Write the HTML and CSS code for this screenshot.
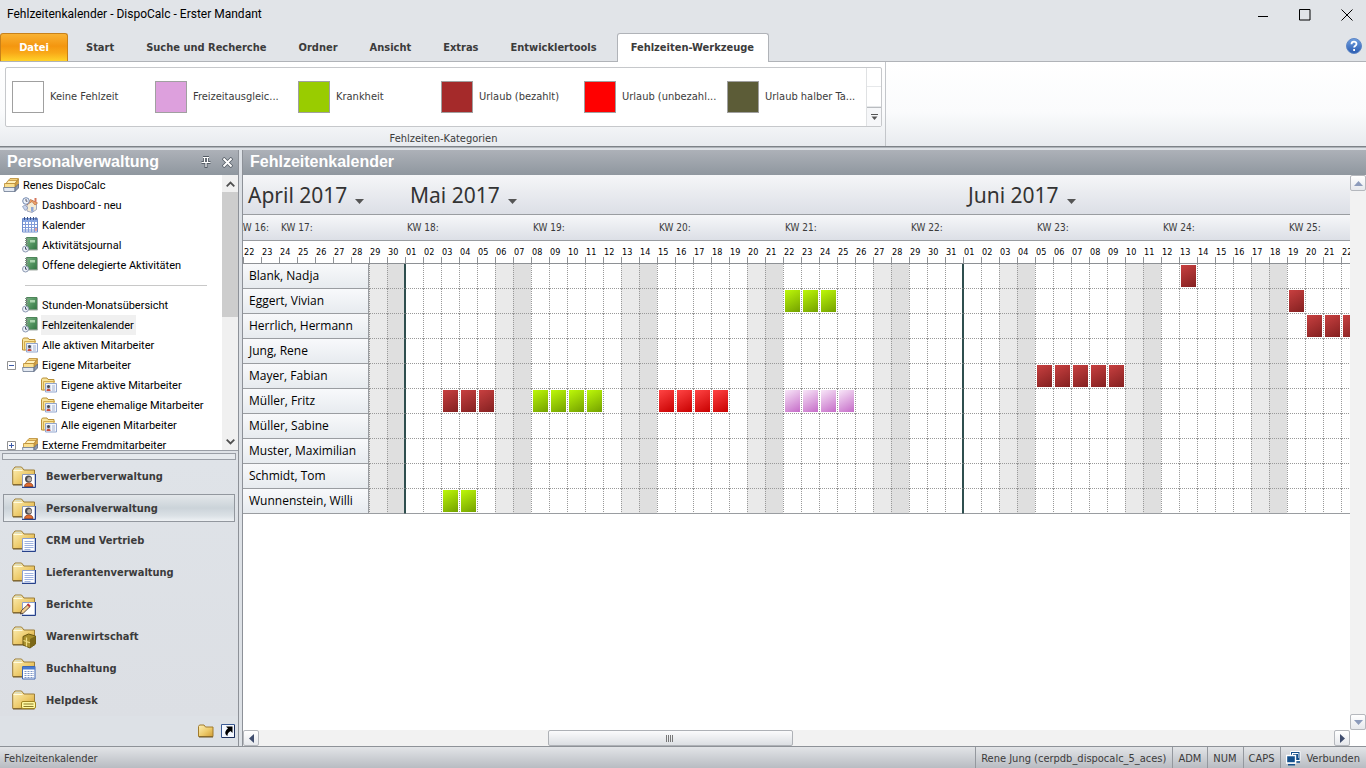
FILE: index.html
```html
<!DOCTYPE html>
<html lang="de">
<head>
<meta charset="utf-8">
<title>Fehlzeitenkalender - DispoCalc - Erster Mandant</title>
<link rel="stylesheet" href="styles.css">
</head>
<body>
<svg class="sprite" aria-hidden="true">
  <defs>
    <linearGradient id="g-folder" x1="0" y1="0" x2="1" y2="1"><stop offset="0" stop-color="#fdf0b8"/><stop offset=".55" stop-color="#edcb6c"/><stop offset="1" stop-color="#d09c34"/></linearGradient>
    <linearGradient id="g-green" x1="0" y1="0" x2="1" y2="1"><stop offset="0" stop-color="#79b583"/><stop offset="1" stop-color="#2f7340"/></linearGradient>
    <linearGradient id="g-help" x1="0" y1="0" x2="0" y2="1"><stop offset="0" stop-color="#6f9fe0"/><stop offset="1" stop-color="#2a5bb0"/></linearGradient>
  </defs>
  <symbol id="i-root" viewBox="0 0 16 16">
    <path d="M4 5 7 1.500h8.500L13 5v5H4z" fill="#f3d07a" stroke="#b88a34" stroke-width=".8"/>
    <path d="M3 6.500 5.500 3.500h8.500L12 6.500z" fill="#fff0bb" stroke="#c1923a" stroke-width=".8"/>
    <path d="M13 5.500 15.500 2v6L12.500 11z" fill="#d9a648" stroke="#a97c2c" stroke-width=".6"/>
    <path d="M1.500 6.500h10.500v4.500H1.500z" fill="#fbdf8e" stroke="#b88a34" stroke-width=".8"/>
    <path d="M.5 10.500h11.500v4H1z" fill="#e3e9f2" stroke="#6b7890" stroke-width=".8"/>
    <path d="M12 10.500 15.500 7v4L12 14.500z" fill="#8b98ad" stroke="#5a6780" stroke-width=".8"/>
  </symbol>
  <symbol id="i-dash" viewBox="0 0 16 16">
    <path d="M5 8v6l5 1.500 4.500-3V7L10 3z" fill="#f4ead2" stroke="#8d96b2" stroke-width=".8"/>
    <path d="M4.500 8l4-5.500L15.500 6 13 8 10 4.500z" fill="#f0a468" stroke="#b9693a" stroke-width=".7"/>
    <path d="M12.500 1h2v4h-2z" fill="#d5765c"/><path d="M9 10h2.500v5L9 14.500z" fill="#8fa8d8"/>
    <circle cx="4" cy="4" r="3.300" fill="#eef3fb" stroke="#7388ad"/><path d="M4 2v2.200h1.500" fill="none" stroke="#556"/>
    <path d="M.5 9.500 3 8l3 3-3 2.500z" fill="#c9d4ec" stroke="#7f8fb2" stroke-width=".7"/>
  </symbol>
  <symbol id="i-cal" viewBox="0 0 16 16">
    <path d="M.5 1.500h15v13.500H.5z" fill="#fff" stroke="#6e8ccb"/><path d="M1 2h14v3H1z" fill="#88a6e2"/>
    <path d="M2.500 0v3M5.500 0v3M8.500 0v3M11.500 0v3M14 0v3" stroke="#3d5387"/>
    <path d="M1 7.500h14M1 10.500h14M1 13h14M3.500 5v10M6.500 5v10M9.500 5v10M12.500 5v10" stroke="#7f9ad8"/>
    <path d="M13 11h2v3h-2z" fill="#e6a1a1"/>
  </symbol>
  <symbol id="i-journal" viewBox="0 0 16 16">
    <path d="M4.500.5H15v12H4.500z" fill="url(#g-green)" stroke="#4d8559"/>
    <path d="M8 3h5v2.500H8z" fill="#a9d3ad"/><path d="M15.500 1v12H5" fill="none" stroke="#a3ada6"/>
    <path d="M3 1.500h3M3 3.500h3M3 5.500h3M3 7.500h3" stroke="#7f8d85"/>
    <circle cx="3.500" cy="12" r="3" fill="#eef2f8" stroke="#8c99b2"/><path d="M3.500 10v2.200H5" fill="none" stroke="#44506b"/>
  </symbol>
  <symbol id="i-people" viewBox="0 0 16 16">
    <path d="M.5 13V2.500L1.500 1H6l1 1.500h6V13z" fill="#f8e49c" stroke="#b89038"/>
    <path d="M2.500 13.500V4.500h11.500" fill="none" stroke="#d2ac50"/>
    <path d="M4.500 6.500h11v8.500h-11z" fill="#f4f7fd" stroke="#93a6ce"/>
    <path d="M5.500 8h4v6h-4z" fill="#b8c4dc"/><circle cx="7.500" cy="9.500" r="1.500" fill="#4a4a52"/><path d="M5.500 14c0-3 4-3 4 0z" fill="#cf4b3c"/>
    <path d="M11 9h3M11 11h3M11 13h3" stroke="#a3b2d0"/>
  </symbol>
  <symbol id="i-folder24" viewBox="0 0 24 24">
    <path d="M.7 19.500V5L3 2h6.500L12 5h10.500v14.500z" fill="url(#g-folder)" stroke="#9b7c38"/>
    <path d="M1.500 5.500h9" stroke="#fffbe0"/><path d="M1 20h21.500" stroke="#6e5829"/>
    <path d="M2.500 4.200 4 2.700h4.800L10 4.200z" fill="#d7dcc4"/>
  </symbol>
  <symbol id="i-nav-person" viewBox="0 0 24 24"><use href="#i-folder24"/>
    <path d="M10.500 9.500H23V22H10.500z" fill="#fff" stroke="#8c9aba"/><path d="M23.500 9v13.500H10" fill="none" stroke="#27418a"/>
    <path d="M12.500 21.500c0-5 8.500-5 8.500 0z" fill="#e06c30" stroke="#7a2e14" stroke-width=".7"/><circle cx="16.500" cy="14" r="3.500" fill="#4c4c50"/><circle cx="17.300" cy="14.300" r="2.200" fill="#b5aeaa"/>
  </symbol>
  <symbol id="i-nav-list" viewBox="0 0 24 24"><use href="#i-folder24"/>
    <path d="M10.500 9.500H23V22H10.500z" fill="#fff" stroke="#8ca0d0"/><path d="M23.500 9v13.500H10" fill="none" stroke="#27418a"/>
    <path d="M12.500 12.500h9M12.500 14.500h9M12.500 16.500h9M12.500 18.500h9M12.500 20.500h6" stroke="#9fb3e0"/>
  </symbol>
  <symbol id="i-nav-pen" viewBox="0 0 24 24"><use href="#i-folder24"/>
    <path d="M10.500 9.500H23V22H10.500z" fill="#fff" stroke="#8ca0d0"/><path d="M23.500 9v13.500H10" fill="none" stroke="#27418a"/>
    <path d="M8.500 21l1-3.500 6.500-6 2 2.200-6.500 6.300z" fill="#f4cf8f" stroke="#3b2a20" stroke-width=".8"/><path d="M15.500 11l2.500 2.500" stroke="#c23a3a" stroke-width="2"/>
  </symbol>
  <symbol id="i-nav-box" viewBox="0 0 24 24"><use href="#i-folder24"/>
    <path d="M11 11.500l5.500-2.500 7 2v8L18 23l-7-3z" fill="#a98f2c" stroke="#6b5812"/><path d="M18 14l5.500-3v8L18 22.500z" fill="#7c6818"/><path d="M11.500 15.500l6.500 2.300M14.500 12.500v9" fill="none" stroke="#f0de86" stroke-width="1.200"/>
  </symbol>
  <symbol id="i-nav-table" viewBox="0 0 24 24"><use href="#i-folder24"/>
    <path d="M10.500 9.500H23V22H10.500z" fill="#fff" stroke="#3f67b4"/><path d="M11 10h12v2.500H11z" fill="#4a7bd0"/>
    <path d="M12.500 14.500h9.500M12.500 16.500h9.500M12.500 18.500h9.500M12.500 20.500h9.500" stroke="#7d96c8" stroke-dasharray="2 1"/>
  </symbol>
  <symbol id="i-nav-note" viewBox="0 0 24 24"><use href="#i-folder24"/>
    <rect x="9.500" y="12.500" width="14" height="7" rx="1.500" fill="#fff9a0" stroke="#a08420"/><path d="M11.500 15h10M11.500 17.500h10" stroke="#8b7a2a"/>
  </symbol>
  <symbol id="i-arrow-up" viewBox="0 0 9 5"><path d="M0 5 4.500 0 9 5z" fill="currentColor"/></symbol>
  <symbol id="i-arrow-down" viewBox="0 0 9 5"><path d="M0 0h9L4.500 5z" fill="currentColor"/></symbol>
</svg>

<header class="titlebar">
  <h1 class="titlebar-text">Fehlzeitenkalender - DispoCalc - Erster Mandant</h1>
  <div class="window-buttons">
    <button aria-label="Minimieren"><svg width="12" height="12"><path d="M1 7.500h10" stroke="#000"/></svg></button>
    <button aria-label="Maximieren"><svg width="12" height="12"><path d="M.5.5h10.500v10.500H.5z" fill="none" stroke="#000"/></svg></button>
    <button aria-label="Schließen"><svg width="12" height="12"><path d="M.5.5l11 11M11.500.5l-11 11" stroke="#000"/></svg></button>
  </div>
</header>

<nav class="tabs">
  <button class="tab tab-file">Datei</button>
  <button class="tab">Start</button>
  <button class="tab">Suche und Recherche</button>
  <button class="tab">Ordner</button>
  <button class="tab">Ansicht</button>
  <button class="tab">Extras</button>
  <button class="tab">Entwicklertools</button>
  <button class="tab tab-active">Fehlzeiten-Werkzeuge</button>
  <button class="help" aria-label="Hilfe"><svg width="16" height="16"><circle cx="8" cy="8" r="7.500" fill="url(#g-help)" stroke="#5d86c6"/><path d="M5.500 6.200c0-3.400 5-3.200 5-.3 0 1.700-2.400 1.900-2.400 3.700M8.100 11v2" fill="none" stroke="#fff" stroke-width="1.800"/></svg></button>
</nav>

<section class="ribbon">
  <div class="ribbon-group">
    <div class="gallery">
      <button class="category"><span class="swatch swatch-none"></span>Keine Fehlzeit</button>
      <button class="category"><span class="swatch swatch-comp"></span>Freizeitausgleic...</button>
      <button class="category"><span class="swatch swatch-sick"></span>Krankheit</button>
      <button class="category"><span class="swatch swatch-paid"></span>Urlaub (bezahlt)</button>
      <button class="category"><span class="swatch swatch-unpaid"></span>Urlaub (unbezahl...</button>
      <button class="category"><span class="swatch swatch-half"></span>Urlaub halber Ta...</button>
      <div class="gallery-scroll">
        <button aria-label="Nach oben"></button>
        <button aria-label="Nach unten"></button>
        <button class="gallery-more" aria-label="Mehr"><svg width="7" height="6"><path d="M0 .5h7" stroke="#555"/><path d="M.5 2.500h6L3.500 6z" fill="#555"/></svg></button>
      </div>
    </div>
    <div class="ribbon-label">Fehlzeiten-Kategorien</div>
  </div>
</section>

<div class="workspace">
  <aside class="sidebar">
    <div class="panel-header">
      <h2>Personalverwaltung</h2>
      <button aria-label="Anheften"><svg width="10" height="12"><path d="M2 1h6M3.500 1v5M6.500 1v5M.5 6.500h9M5 7v5" fill="none" stroke="#555d66" stroke-width="3"/><path d="M2 1.500h6M3.500 1v5M6.500 1v5M.5 6.500h9M5 7v4" fill="none" stroke="#fff" stroke-width="1.200"/></svg></button>
      <button aria-label="Schließen"><svg width="11" height="11"><path d="M1 1l9 9M10 1l-9 9" stroke="#555d66" stroke-width="3.500"/><path d="M1.500 1.500l8 8M9.500 1.500l-8 8" stroke="#fff" stroke-width="2"/></svg></button>
    </div>
    <div class="tree-pane">
      <ul class="tree">
        <li class="level-0"><svg class="icon"><use href="#i-root"/></svg><span>Renes DispoCalc</span></li>
        <li class="level-1"><i class="toggle-space"></i><svg class="icon"><use href="#i-dash"/></svg><span>Dashboard - neu</span></li>
        <li class="level-1"><i class="toggle-space"></i><svg class="icon"><use href="#i-cal"/></svg><span>Kalender</span></li>
        <li class="level-1"><i class="toggle-space"></i><svg class="icon"><use href="#i-journal"/></svg><span>Aktivitätsjournal</span></li>
        <li class="level-1"><i class="toggle-space"></i><svg class="icon"><use href="#i-journal"/></svg><span>Offene delegierte Aktivitäten</span></li>
        <li class="tree-separator"><hr></li>
        <li class="level-1"><i class="toggle-space"></i><svg class="icon"><use href="#i-journal"/></svg><span>Stunden-Monatsübersicht</span></li>
        <li class="level-1"><i class="toggle-space"></i><svg class="icon"><use href="#i-journal"/></svg><span class="selected">Fehlzeitenkalender</span></li>
        <li class="level-1"><i class="toggle-space"></i><svg class="icon"><use href="#i-people"/></svg><span>Alle aktiven Mitarbeiter</span></li>
        <li class="level-1"><button class="toggle" aria-label="Zuklappen"><svg width="9" height="9"><path d="M.5.5h8v8h-8z" fill="#fff" stroke="#919191"/><path d="M2 4.500h5" stroke="#3c5aa8"/></svg></button><svg class="icon"><use href="#i-root"/></svg><span>Eigene Mitarbeiter</span></li>
        <li class="level-2"><svg class="icon"><use href="#i-people"/></svg><span>Eigene aktive Mitarbeiter</span></li>
        <li class="level-2"><svg class="icon"><use href="#i-people"/></svg><span>Eigene ehemalige Mitarbeiter</span></li>
        <li class="level-2"><svg class="icon"><use href="#i-people"/></svg><span>Alle eigenen Mitarbeiter</span></li>
        <li class="level-1"><button class="toggle" aria-label="Aufklappen"><svg width="9" height="9"><path d="M.5.5h8v8h-8z" fill="#fff" stroke="#919191"/><path d="M2 4.500h5M4.500 2v5" stroke="#3c5aa8"/></svg></button><svg class="icon"><use href="#i-root"/></svg><span>Externe Fremdmitarbeiter</span></li>
      </ul>
      <div class="tree-scroll">
        <button aria-label="Nach oben"><svg width="9" height="6"><path d="M.7 5.300 4.500 1.500l3.800 3.800" fill="none" stroke="#505050" stroke-width="1.800"/></svg></button>
        <div class="tree-thumb"></div>
        <button aria-label="Nach unten"><svg width="9" height="6"><path d="M.7.7 4.500 4.500 8.300.7" fill="none" stroke="#505050" stroke-width="1.800"/></svg></button>
      </div>
    </div>
    <div class="splitter"></div>
    <nav class="modules">
      <button class="module"><svg class="icon-lg"><use href="#i-nav-person"/></svg>Bewerberverwaltung</button>
      <button class="module module-active"><svg class="icon-lg"><use href="#i-nav-person"/></svg>Personalverwaltung</button>
      <button class="module"><svg class="icon-lg"><use href="#i-nav-list"/></svg>CRM und Vertrieb</button>
      <button class="module"><svg class="icon-lg"><use href="#i-nav-list"/></svg>Lieferantenverwaltung</button>
      <button class="module"><svg class="icon-lg"><use href="#i-nav-pen"/></svg>Berichte</button>
      <button class="module"><svg class="icon-lg"><use href="#i-nav-box"/></svg>Warenwirtschaft</button>
      <button class="module"><svg class="icon-lg"><use href="#i-nav-table"/></svg>Buchhaltung</button>
      <button class="module"><svg class="icon-lg"><use href="#i-nav-note"/></svg>Helpdesk</button>
    </nav>
    <div class="module-footer">
      <button aria-label="Ordner"><svg width="16" height="14"><path d="M.5 12.500v-10L1.500 1H6l1.500 2h7.500v9.500z" fill="url(#g-folder)" stroke="#a07a2c"/><path d="M1 13h14" stroke="#6e5829"/></svg></button>
      <button aria-label="Verknüpfungen"><svg width="14" height="14"><path d="M.5.5h13v13H.5z" fill="#f4f8ff" stroke="#3a5a94"/><path d="M13.500 1v12.500H1" fill="none" stroke="#1c2f5c"/><path d="M5 2.500h6.500V9L9.500 7C7 8.500 6.500 10 6.500 12 3 10 4 6.500 7 4.500z" fill="#000"/></svg></button>
    </div>
  </aside>

  <main class="content">
    <div class="panel-header"><h2>Fehlzeitenkalender</h2></div>
    <div class="calendar-area">
      <div class="calendar-view"><table class="calendar" id="calendar"></table></div>
      <div class="vscroll">
        <button aria-label="Nach oben"><svg width="9" height="5"><use href="#i-arrow-up"/></svg></button>
        <button aria-label="Nach unten"><svg width="9" height="5"><use href="#i-arrow-down"/></svg></button>
      </div>
      <div class="hscroll">
        <button aria-label="Nach links"><svg width="5" height="9"><path d="M5 0v9L0 4.500z" fill="#3f4d6e"/></svg></button>
        <div class="hscroll-track"><div class="hscroll-thumb"><svg width="9" height="7"><path d="M.5 0v7M2.500 0v7M4.500 0v7M6.500 0v7" stroke="#777"/></svg></div></div>
        <button aria-label="Nach rechts"><svg width="5" height="9"><path d="M0 0v9l5-4.500z" fill="#3f4d6e"/></svg></button>
      </div>
    </div>
  </main>
</div>

<footer class="statusbar">
  <span class="status-main">Fehlzeitenkalender</span>
  <span class="status-cell">Rene Jung (cerpdb_dispocalc_5_aces)</span>
  <span class="status-cell">ADM</span>
  <span class="status-cell">NUM</span>
  <span class="status-cell">CAPS</span>
  <span class="status-cell"><svg width="15" height="15"><path d="M4.500.5H14v9H4.500z" fill="#14508c" stroke="#fff"/><path d="M6 2h6.500v5H6z" fill="#fff"/><path d="M7 3h5v4H7z" fill="#14508c"/><path d="M.5 4.500h9v7.500h-9z" fill="#14508c" stroke="#fff" stroke-width="1.400"/><path d="M2 13.800h7M10.500 11h3.500" stroke="#14508c" stroke-width="1.400"/></svg>Verbunden</span>
</footer>
<script src="calendar.js"></script>
</body>
</html>
```

FILE: styles.css
```css
* { box-sizing: border-box; }

body {
  margin: 0;
  height: 100vh;
  display: flex;
  flex-direction: column;
  overflow: hidden;
  background: #e1e4e8;
  color: #3b3b3b;
  font: 11px/14px "DejaVu Sans Condensed", Tahoma, sans-serif;
}

button {
  margin: 0;
  padding: 0;
  border: 0;
  background: none;
  color: inherit;
  font: inherit;
  display: flex;
  align-items: center;
  justify-content: center;
}

h1, h2, ul { margin: 0; padding: 0; }
svg { display: block; flex: none; }
.sprite { position: absolute; width: 0; height: 0; }
.icon { width: 16px; height: 16px; }
.icon-lg { width: 24px; height: 24px; }

/* Title bar */
.titlebar { display: flex; height: 33px; padding: 0 0 3px 7px; align-items: center; }
.titlebar-text { flex: 1; padding-bottom: 2px; font: 12px/16px Roboto, "Segoe UI", sans-serif; color: #000; }
.window-buttons { display: flex; gap: 4px; }
.window-buttons button { width: 38px; height: 30px; }

/* Ribbon tabs */
.tabs { display: flex; height: 29px; border-bottom: 1px solid #b0b3b8; }
.tab { height: 28px; padding: 2px 16px 0; font-weight: bold; }
.tab-file {
  width: 68px;
  margin-right: 2px;
  padding-top: 0;
  border: 1px solid #c8811a;
  border-bottom: 0;
  border-radius: 3px 3px 0 0;
  background: linear-gradient(#f9b233, #f4960f 45%, #f9a918 70%, #ffd229);
  color: #fff;
}
.tab-active {
  height: 29px;
  margin-left: 4px;
  padding: 0 14px 1px 13px;
  border: 1px solid #b0b3b8;
  border-bottom: 0;
  border-radius: 3px 3px 0 0;
  background: #fff;
}
.help { margin: 5px 4px 7px auto; }

/* Ribbon */
.ribbon {
  display: flex;
  height: 85px;
  border-bottom: 1px solid #7d8288;
  background: linear-gradient(#fff, #fafbfc 60%, #e8ebef);
}
.ribbon-group { padding: 5px 3px 0 5px; border-right: 1px solid #c3c6ca; }
.gallery {
  display: flex;
  height: 60px;
  padding-left: 6px;
  border: 1px solid #c6c8cb;
  border-radius: 2px;
  background: #fff;
}
.category { width: 143px; gap: 6px; justify-content: flex-start; }
.category:nth-child(6) { width: 139px; }
.swatch { width: 32px; height: 32px; border: 1px solid #a0a0a0; }
.swatch-none { background: #fff; }
.swatch-comp { background: #dda0dd; }
.swatch-sick { background: #9c0; }
.swatch-paid { background: #a52a2a; }
.swatch-unpaid { background: #f00; }
.swatch-half { background: #5c5c37; }
.gallery-scroll { display: grid; grid-template-rows: 19px 20px 19px; width: 15px; border-left: 1px solid #dfe1e3; }
.gallery-scroll button { border-bottom: 1px solid #e6e8ea; }
.gallery-scroll .gallery-more { border: 0; border-top: 1px solid #b9bcc0; background: #f6f7f9; }
.ribbon-label { padding-top: 5px; text-align: center; }

/* Workspace */
.workspace { flex: 1; min-height: 0; display: flex; gap: 3px; padding-top: 2px; background: #dde1e6; border-top: 1px solid #aeb3b9; }
.panel-header {
  display: flex;
  align-items: center;
  gap: 11px;
  height: 25px;
  padding: 0 5px 1px 7px;
  background: linear-gradient(#adb1b8, #8f979f);
  color: #fff;
}
.panel-header h2 { flex: 1; font: bold 16px/20px "Liberation Sans", Arial, sans-serif; }

/* Sidebar */
.sidebar { width: 239px; flex: none; display: flex; flex-direction: column; border-right: 1px solid #8d9198; }
.tree-pane { flex: 1; min-height: 0; display: flex; overflow: hidden; background: #fff; }
.tree { flex: 1; list-style: none; color: #000; font: 11px/15px Roboto, Tahoma, sans-serif; }
.tree li { display: flex; align-items: center; height: 20px; gap: 3px; }
.tree .level-0 { padding-left: 3px; }
.tree .level-1 { padding-left: 7px; }
.tree .level-2 { padding-left: 41px; }
.tree span { padding: 3px 1px 2px; white-space: nowrap; }
.tree .selected { padding-right: 2px; background: #f0f0f0; }
.toggle, .toggle-space { width: 9px; height: 9px; margin-right: 3px; }
.tree-separator hr { flex: 1; margin: 0 15px 0 25px; border: 0; border-top: 1px solid #c8c8c8; }
.tree-scroll { display: grid; grid-template-rows: 17px 1fr 17px; width: 16px; background: #f0f0f0; }
.tree-thumb { height: 52%; background: #cdcdcd; }
.splitter { height: 10px; padding: 2px; border-top: 1px solid #9a9ea6; background: #dfe2e7; }
.splitter::before { content: ""; display: block; height: 5px; border: 1px solid #9a9ea6; background: #e6e9ed; }
.modules { display: flex; flex-direction: column; gap: 4px; padding: 2px 3px; background: linear-gradient(#dfe3e8, #dcdfe4); }
.module { height: 28px; padding: 2px 0 0 8px; gap: 10px; border: 1px solid transparent; justify-content: flex-start; font-weight: bold; }
.module-active {
  border-color: #92979e;
  background: linear-gradient(#e3e7ea, #cbd3d9 50%, #dbe1e6 80%, #eef1f4);
}
.module-footer { display: flex; justify-content: flex-end; align-items: center; gap: 7px; height: 30px; padding-right: 3px; }

/* Content */
.content { flex: 1; min-width: 0; display: flex; flex-direction: column; border-left: 1px solid #8d9198; background: #fff; }
.calendar-area { flex: 1; min-height: 0; display: grid; grid-template-columns: minmax(0, 1fr) 16px; grid-template-rows: minmax(0, 1fr) 16px; }
.calendar-view { overflow: hidden; }
.calendar { width: 1116px; table-layout: fixed; border-collapse: separate; border-spacing: 0; }
.calendar th, .calendar td { padding: 0; overflow: hidden; white-space: nowrap; text-align: left; font-weight: normal; }
.months th {
  height: 40px;
  border-bottom: 1px solid #9a9da1;
  background: linear-gradient(#f5f6f8, #dcdfe6);
  color: #333;
}
.month { padding: 0 5px; gap: 8px; font: 21px/30px "Noto Sans", Tahoma, sans-serif; }
.month svg { margin-top: 14px; color: #555; }
.weeks th {
  height: 26px;
  border-bottom: 1px solid #9a9da1;
  background: linear-gradient(#f6f7f9, #dcdfe6);
  font-size: 10px;
}
.week { display: flex; padding-left: 2px; }
.week-partial { justify-content: flex-end; padding: 0 10px 0 0; }
.days th {
  height: 23px;
  padding-left: 1px;
  border-bottom: 1px solid #8e9195;
  background: linear-gradient(#8e9195, #8e9195) left bottom / 1px 6px no-repeat;
  color: #000;
  font-size: 9px;
}
.calendar .employee {
  height: 25px;
  padding-left: 6px;
  border-right: 1px solid #9a9da1;
  border-bottom: 1px solid #9a9da1;
  background: linear-gradient(#f8f9fb, #e7ebef);
  color: #000;
  font: 12px/16px "Open Sans", "Segoe UI", sans-serif;
}
.calendar .day { padding: 1px; border-left: 1px dotted #999; border-bottom: 1px dotted #999; }
.calendar tr:last-child .day { border-bottom: 1px solid #9a9da1; }
.calendar .saturday { background-color: #eaeaea; }
.calendar .sunday { background-color: #dfdfdf; }
.calendar .month-start { border-left: 1px solid #2f4f4f; }
.calendar .month-end { border-right: 1px solid #2f4f4f; }
.absence { height: 22px; }
.absence-paid { background: linear-gradient(150deg, #c84040, #832020); }
.absence-sick { background: linear-gradient(150deg, #bdf808, #73a000); }
.absence-unpaid { background: linear-gradient(150deg, #ff4444, #c80000); }
.absence-comp { background: linear-gradient(150deg, #f8e6f8, #c56bc8); }

/* Scroll bars */
.vscroll, .hscroll { display: flex; justify-content: space-between; background: #f2f2f2; }
.vscroll { flex-direction: column; color: #8c9bbb; }
.vscroll button, .hscroll button { width: 16px; height: 16px; border: 1px solid #b5b8bd; border-radius: 2px; background: linear-gradient(#fff, #e6e8ec); }
.hscroll-track { flex: 1; padding-right: 6px; }
.hscroll-thumb {
  display: flex;
  align-items: center;
  justify-content: center;
  width: 23%;
  height: 16px;
  margin-left: 27%;
  border: 1px solid #aeb1b6;
  border-radius: 2px;
  background: linear-gradient(#fbfbfc, #dcdfe3);
}

/* Status bar */
.statusbar { display: flex; height: 22px; border-top: 1px solid #8e9298; background: linear-gradient(#e2e4e7, #b8bcc2); }
.status-main { flex: 1; padding: 5px 4px 0; }
.status-cell { display: flex; align-items: center; gap: 5px; padding: 2px 6px 0 5px; border-left: 1px solid #94989e; }
```

FILE: calendar.js
```js
const FIRST_DAY = new Date(2017, 3, 22);
const DAY_COUNT = 62;
const NAME_COLUMNS = 7;
const MONTH_NAMES = { 3: "April", 4: "Mai", 5: "Juni" };

const employees = [
  { name: "Blank, Nadja", absences: [["paid", "6-13", 1]] },
  { name: "Eggert, Vivian", absences: [["sick", "5-22", 3], ["paid", "6-19", 1]] },
  { name: "Herrlich, Hermann", absences: [["paid", "6-20", 3]] },
  { name: "Jung, Rene", absences: [] },
  { name: "Mayer, Fabian", absences: [["paid", "6-5", 5]] },
  { name: "Müller, Fritz", absences: [["paid", "5-3", 3], ["sick", "5-8", 4], ["unpaid", "5-15", 4], ["comp", "5-22", 4]] },
  { name: "Müller, Sabine", absences: [] },
  { name: "Muster, Maximilian", absences: [] },
  { name: "Schmidt, Tom", absences: [] },
  { name: "Wunnenstein, Willi", absences: [["sick", "5-3", 2]] }
];

const days = Array.from({ length: DAY_COUNT }, (_, i) =>
  new Date(FIRST_DAY.getFullYear(), FIRST_DAY.getMonth(), FIRST_DAY.getDate() + i));

function dayIndex(key) {
  const [month, day] = key.split("-").map(Number);
  return days.findIndex(d => d.getMonth() === month - 1 && d.getDate() === day);
}

function monthRow() {
  const counts = new Map();
  days.forEach(d => counts.set(d.getMonth(), (counts.get(d.getMonth()) || 0) + 1));
  let html = "";
  counts.forEach((count, month) => {
    html += `<th colspan="${count}"><button class="month">${MONTH_NAMES[month]} 2017<svg width="9" height="5"><use href="#i-arrow-down"/></svg></button></th>`;
  });
  return html;
}

function weekRow() {
  let html = `<th colspan="2"><div class="week week-partial">KW 16:</div></th>`;
  let week = 17;
  for (let i = 2; i < DAY_COUNT; i += 7) {
    html += `<th colspan="${Math.min(7, DAY_COUNT - i)}"><div class="week">KW ${week++}:</div></th>`;
  }
  return html;
}

function employeeRow(employee) {
  const marks = {};
  employee.absences.forEach(([kind, start, length]) => {
    const first = dayIndex(start);
    for (let i = 0; i < length; i++) marks[first + i] = kind;
  });
  let html = `<th class="employee" colspan="${NAME_COLUMNS}">${employee.name}</th>`;
  for (let i = NAME_COLUMNS; i < DAY_COUNT; i++) {
    const classes = ["day"];
    if (days[i].getDay() === 6) classes.push("saturday");
    if (days[i].getDay() === 0) classes.push("sunday");
    if (days[i].getDate() === 1) classes.push("month-start");
    if (days[i + 1] && days[i + 1].getDate() === 1) classes.push("month-end");
    const mark = marks[i] ? `<div class="absence absence-${marks[i]}"></div>` : "";
    html += `<td class="${classes.join(" ")}">${mark}</td>`;
  }
  return html;
}

document.getElementById("calendar").innerHTML =
  `<colgroup>${"<col>".repeat(DAY_COUNT)}</colgroup>` +
  `<thead><tr class="months">${monthRow()}</tr><tr class="weeks">${weekRow()}</tr>` +
  `<tr class="days">${days.map(d => `<th>${String(d.getDate()).padStart(2, "0")}</th>`).join("")}</tr></thead>` +
  `<tbody>${employees.map(e => `<tr>${employeeRow(e)}</tr>`).join("")}</tbody>`;
```
